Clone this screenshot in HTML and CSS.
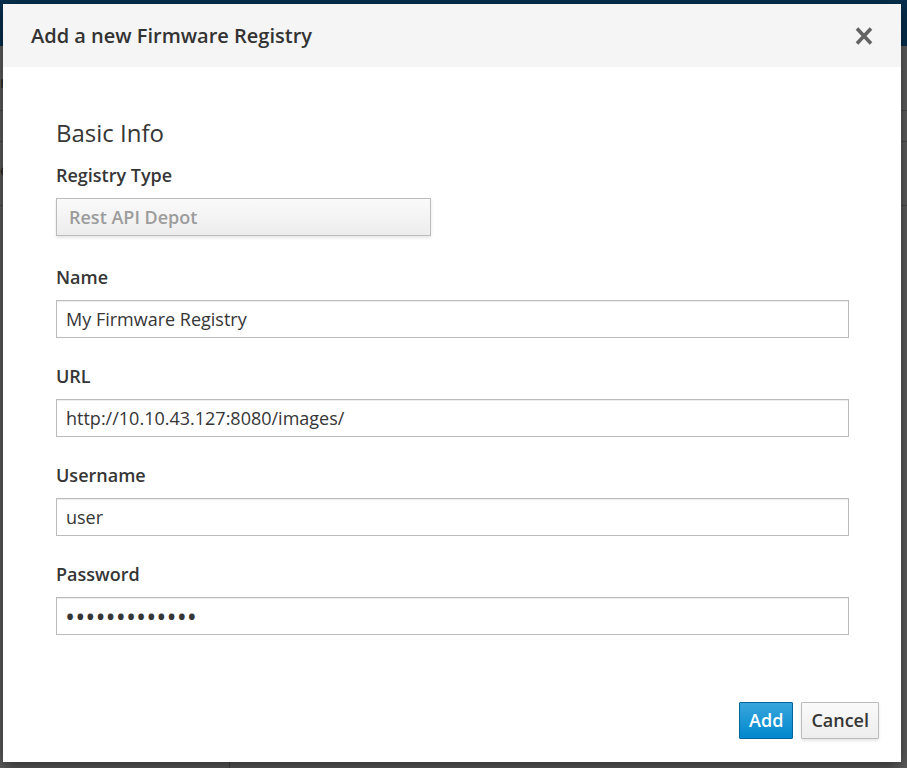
FILE: index.html
```html
<!DOCTYPE html>
<html lang="en">
<head>
<meta charset="utf-8">
<title>Add a new Firmware Registry</title>
<link rel="stylesheet" href="styles.css">
</head>
<body>
<div class="page">
  <div class="navbar"></div>
  <div class="content">
    <div class="bg-row bg-row-a">r</div>
    <div class="bg-row bg-row-b"></div>
    <div class="bg-row bg-row-c">e</div>
    <div class="bg-split"></div>
  </div>
</div>

<div class="modal" role="dialog">
  <div class="modal-header">
    <h4 class="modal-title">Add a new Firmware Registry</h4>
    <button class="close" type="button" aria-label="Close">
      <svg width="18" height="20" viewBox="0 0 18 20"><path d="M2 2.5 L16 17.5 M16 2.5 L2 17.5" stroke="#636363" stroke-width="3.6" stroke-linecap="butt" fill="none"/></svg>
    </button>
  </div>
  <div class="modal-body">
    <h3 class="section-title">Basic Info</h3>
    <div class="form-group form-group-select">
      <label class="control-label">Registry Type</label>
      <div class="select-btn">Rest API Depot</div>
    </div>
    <div class="form-group">
      <label class="control-label">Name</label>
      <input class="form-control" type="text" value="My Firmware Registry">
    </div>
    <div class="form-group">
      <label class="control-label">URL</label>
      <input class="form-control" type="text" value="http://10.10.43.127:8080/images/">
    </div>
    <div class="form-group">
      <label class="control-label">Username</label>
      <input class="form-control" type="text" value="user">
    </div>
    <div class="form-group">
      <label class="control-label">Password</label>
      <input class="form-control password" type="password" value="1234567890123">
    </div>
  </div>
  <div class="modal-footer">
    <button class="btn btn-primary" type="button">Add</button>
    <button class="btn btn-default" type="button">Cancel</button>
  </div>
</div>
</body>
</html>
```

FILE: styles.css
```css
html, body {
  margin: 0;
  padding: 0;
  height: 100%;
}
body {
  font-family: "Open Sans", "Noto Sans", sans-serif;
  color: #363636;
  overflow: hidden;
}
.page {
  height: 768px;
  display: flex;
  flex-direction: column;
  background: #5e5e5e;
}
.navbar {
  height: 46px;
  background: #062f4e;
  flex: none;
}
.content {
  flex: 1;
  position: relative;
  color: #222;
  font-size: 16px;
}
.bg-row {
  border-bottom: 1px solid #4a4a4a;
}
.bg-row-a {
  height: 56px;
  line-height: 56px;
  padding-top: 8px;
}
.bg-row-b {
  height: 30px;
}
.bg-row-c {
  height: 63px;
  line-height: 56px;
}
.bg-split {
  position: absolute;
  left: 229px;
  top: 200px;
  bottom: 0;
  border-left: 1px solid #444;
}

.modal {
  position: absolute;
  left: 3px;
  top: 4px;
  width: 898px;
  height: 758px;
  background: #fff;
  box-shadow: 0 5px 15px rgba(0, 0, 0, 0.5);
  display: flex;
  flex-direction: column;
}
.modal-header {
  height: 63px;
  background: #f5f5f5;
  display: flex;
  align-items: center;
  justify-content: space-between;
  padding: 0 28px 0 28px;
  flex: none;
}
.modal-title {
  margin: 0;
  font-size: 20px;
  font-weight: 600;
  line-height: 28px;
  color: #333;
}
.close {
  background: none;
  border: 0;
  padding: 0;
  width: 18px;
  height: 20px;
  display: flex;
  cursor: pointer;
}
.modal-body {
  flex: 1;
  padding: 50px 52px 0 53px;
}
.section-title {
  margin: 0 0 14px;
  font-size: 24px;
  font-weight: 400;
  line-height: 32px;
  color: #363636;
}
.form-group {
  margin-bottom: 26px;
}
.form-group-select {
  margin-bottom: 29px;
}
.control-label {
  display: block;
  font-size: 18px;
  font-weight: 600;
  line-height: 24px;
  margin-bottom: 11px;
  color: #363636;
}
.select-btn {
  box-sizing: border-box;
  width: 375px;
  height: 38px;
  padding: 0 12px;
  border: 1px solid #bbb;
  background: linear-gradient(to bottom, #fafafa 0%, #ededed 100%);
  box-shadow: 0 2px 3px rgba(3, 3, 3, 0.1);
  color: #9c9c9c;
  font-size: 18px;
  font-weight: 600;
  line-height: 36px;
}
.form-control {
  display: block;
  box-sizing: border-box;
  width: 100%;
  height: 38px;
  margin: 0;
  padding: 0 9px;
  border: 1px solid #bbb;
  border-radius: 0;
  box-shadow: inset 0 1px 1px rgba(3, 3, 3, 0.075);
  font-family: "Open Sans", "Noto Sans", sans-serif;
  font-size: 18px;
  color: #363636;
  background: #fff;
  outline: none;
}
.password {
  font-size: 27px;
  letter-spacing: 0;
  padding: 0 8px;
  line-height: 36px;
}
.modal-footer {
  flex: none;
  display: flex;
  justify-content: flex-end;
  gap: 8px;
  padding: 0 22px 23px 0;
}
.btn {
  box-sizing: border-box;
  height: 37px;
  margin: 0;
  padding: 0 9px;
  font-family: "Open Sans", "Noto Sans", sans-serif;
  font-size: 18px;
  font-weight: 600;
  line-height: 35px;
  border: 1px solid;
  border-radius: 1px;
  cursor: pointer;
}
.btn-primary {
  color: #fff;
  border-color: #00659c;
  background: linear-gradient(to bottom, #39a5dc 0%, #0088ce 100%);
}
.btn-default {
  color: #363636;
  border-color: #bbb;
  background: linear-gradient(to bottom, #fafafa 0%, #ededed 100%);
  box-shadow: 0 2px 3px rgba(3, 3, 3, 0.1);
}
```
